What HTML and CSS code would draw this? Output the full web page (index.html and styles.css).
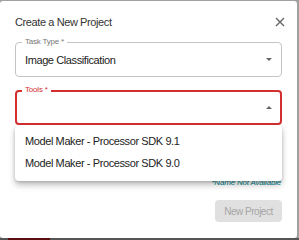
FILE: index.html
```html
<!DOCTYPE html>
<html lang="en">

<head>
    <meta charset="UTF-8">
    <meta name="viewport" content="width=device-width, initial-scale=1.0">
    <title>Create a New Project</title>
    <link rel="stylesheet" href="styles.css">
</head>

<body>

    <div class="dialog">
        <div class="dialog-header">
            <h2>Create a New Project</h2>
            <button class="close-btn" aria-label="Close">
                <svg width="10" height="10" viewBox="0 0 10 10">
                    <path d="M1 1 L9 9 M9 1 L1 9" stroke="#666" stroke-width="1.4" fill="none" />
                </svg>
            </button>
        </div>

        <div class="field">
            <span class="field-label">Task Type *</span>
            <div class="field-value">Image Classification</div>
            <span class="arrow down"></span>
        </div>

        <div class="field field-error">
            <span class="field-label">Tools *</span>
            <div class="field-value"></div>
            <span class="arrow up"></span>
            <ul class="menu">
                <li>Model Maker - Processor SDK 9.1</li>
                <li>Model Maker - Processor SDK 9.0</li>
            </ul>
        </div>

        <p class="hint">*Name Not Available</p>

        <div class="actions">
            <button class="primary-btn" disabled>New Project</button>
        </div>
    </div>

    <div class="backdrop-bar"><span class="tab"></span></div>

</body>

</html>
```

FILE: styles.css
```css
body {
    margin: 0;
    font-family: "Liberation Sans", Arial, sans-serif;
    background-color: #a0a0a0;
    width: 299px;
    height: 240px;
    overflow: hidden;
}

.dialog {
    background: white;
    margin: 1px 2px 0 0;
    height: 237px;
    padding: 0 15px;
    box-sizing: border-box;
    border-radius: 3px;
}

.dialog-header {
    display: flex;
    justify-content: space-between;
    align-items: center;
    height: 41px;
}

.dialog-header h2 {
    margin: 0;
    font-size: 11px;
    letter-spacing: -0.4px;
    font-weight: normal;
    color: #333;
}

.close-btn {
    background: none;
    border: none;
    padding: 0;
    margin-right: -3px;
    display: flex;
}

.field {
    position: relative;
    border: 1px solid #c4c4c4;
    border-radius: 4px;
    height: 35px;
    box-sizing: border-box;
    display: flex;
    align-items: center;
    padding: 0 9px;
}

.field + .field {
    margin-top: 13px;
}

.field-label {
    position: absolute;
    top: -6px;
    left: 6px;
    background: white;
    padding: 0 3px;
    font-size: 8px;
    letter-spacing: -0.2px;
    color: #777;
}

.field-value {
    flex: 1;
    font-size: 11px;
    letter-spacing: -0.4px;
    color: #222;
}

.arrow {
    width: 0;
    height: 0;
    border-left: 3px solid transparent;
    border-right: 3px solid transparent;
}

.arrow.down {
    border-top: 3px solid #666;
}

.arrow.up {
    border-bottom: 3px solid #666;
}

.field-error {
    border: 2px solid #d32f2f;
    padding: 0 8px;
}

.field-error .field-label {
    color: #d32f2f;
    top: -7px;
    left: 5px;
}

.menu {
    position: absolute;
    top: 33px;
    left: -2px;
    right: -2px;
    margin: 0;
    padding: 5px 0 7px;
    list-style: none;
    background: white;
    border-radius: 4px;
    box-shadow: 0 4px 6px rgba(0, 0, 0, 0.25), 0 1px 3px rgba(0, 0, 0, 0.15);
    z-index: 2;
}

.menu li {
    padding: 0 10px;
    height: 22px;
    line-height: 22px;
    font-size: 11px;
    letter-spacing: -0.4px;
    color: #222;
}

.hint {
    margin: 53px 1px 0 0;
    text-align: right;
    font-size: 8px;
    letter-spacing: -0.2px;
    font-style: italic;
    color: #00838f;
}

.actions {
    display: flex;
    justify-content: flex-end;
    margin-top: 13px;
}

.primary-btn {
    background-color: #e0e0e0;
    color: #a6a6a6;
    border: none;
    border-radius: 4px;
    font-family: "Liberation Sans", Arial, sans-serif;
    font-size: 10px;
    letter-spacing: -0.5px;
    width: 67px;
    height: 22px;
    padding: 0;
}

.backdrop-bar {
    height: 2px;
    background: #555;
    display: flex;
}

.backdrop-bar .tab {
    margin-left: 8px;
    width: 42px;
    background: #5a1010;
}
```
